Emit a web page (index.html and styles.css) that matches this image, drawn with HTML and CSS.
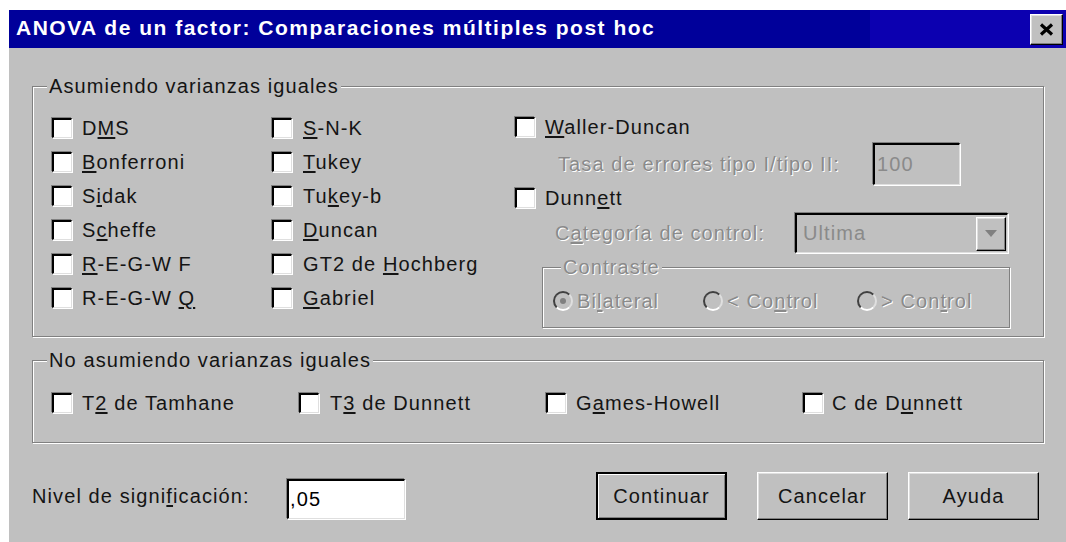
FILE: index.html
```html
<!DOCTYPE html>
<html lang="es">
<head>
<meta charset="utf-8">
<title>ANOVA de un factor: Comparaciones múltiples post hoc</title>
<link rel="stylesheet" href="styles.css">
</head>
<body>
<div class="dialog">
  <header class="titlebar">
    <span class="title">ANOVA de un factor: Comparaciones múltiples post hoc</span>
    <span class="close-btn">
      <svg width="15" height="13" viewBox="0 0 15 13"><path d="M2 1.5 L13 11.5 M13 1.5 L2 11.5" stroke="#000" stroke-width="3.2" fill="none"/></svg>
    </span>
  </header>

  <div class="client">
    <section class="group group-equal">
      <span class="legend">Asumiendo varianzas iguales</span>
      <div class="col col-a">
        <label class="check"><span class="box"></span><span>D<u>M</u>S</span></label>
        <label class="check"><span class="box"></span><span><u>B</u>onferroni</span></label>
        <label class="check"><span class="box"></span><span>S<u>i</u>dak</span></label>
        <label class="check"><span class="box"></span><span>S<u>c</u>heffe</span></label>
        <label class="check"><span class="box"></span><span><u>R</u>-E-G-W F</span></label>
        <label class="check"><span class="box"></span><span>R-E-G-W <u>Q</u></span></label>
      </div>
      <div class="col col-b">
        <label class="check"><span class="box"></span><span><u>S</u>-N-K</span></label>
        <label class="check"><span class="box"></span><span><u>T</u>ukey</span></label>
        <label class="check"><span class="box"></span><span>Tu<u>k</u>ey-b</span></label>
        <label class="check"><span class="box"></span><span><u>D</u>uncan</span></label>
        <label class="check"><span class="box"></span><span>GT2 de <u>H</u>ochberg</span></label>
        <label class="check"><span class="box"></span><span><u>G</u>abriel</span></label>
      </div>
      <div class="col col-c">
        <label class="check check-waller"><span class="box"></span><span><u>W</u>aller-Duncan</span></label>
        <div class="field-row row-rate">
          <span class="disabled rate-label">Tasa de errores tipo I/tipo II:</span>
          <span class="field field-rate disabled-field">100</span>
        </div>
        <label class="check check-dunnett"><span class="box"></span><span>Dunn<u>e</u>tt</span></label>
        <div class="field-row row-cat">
          <span class="disabled cat-label">C<u>a</u>tegoría de control:</span>
          <span class="field combo disabled-field">
            <span class="combo-value">Ultima</span>
            <span class="combo-btn"><svg width="12" height="7" viewBox="0 0 12 7"><path d="M0 0 H12 L6 7 Z" fill="#808080"/></svg></span>
          </span>
        </div>
        <section class="group group-contrast">
          <span class="legend disabled">Contraste</span>
          <div class="radios">
            <span class="radio"><span class="dot on"></span><span class="disabled">Bi<u>l</u>ateral</span></span>
            <span class="radio"><span class="dot"></span><span class="disabled">&lt; Co<u>n</u>trol</span></span>
            <span class="radio"><span class="dot"></span><span class="disabled">&gt; Con<u>t</u>rol</span></span>
          </div>
        </section>
      </div>
    </section>

    <section class="group group-unequal">
      <span class="legend">No asumiendo varianzas iguales</span>
      <div class="row-unequal">
        <label class="check"><span class="box"></span><span>T<u>2</u> de Tamhane</span></label>
        <label class="check"><span class="box"></span><span>T<u>3</u> de Dunnett</span></label>
        <label class="check"><span class="box"></span><span>G<u>a</u>mes-Howell</span></label>
        <label class="check"><span class="box"></span><span>C de D<u>u</u>nnett</span></label>
      </div>
    </section>

    <div class="footer">
      <span class="sig-label">Nivel de signi<u>f</u>icación:</span>
      <span class="field field-sig">,05</span>
      <span class="btn btn-default">Continuar</span>
      <span class="btn btn-cancel">Cancelar</span>
      <span class="btn btn-help">Ayuda</span>
    </div>
  </div>
</div>
</body>
</html>
```

FILE: styles.css
```css
html, body {
  margin: 0;
  padding: 0;
  background: #fff;
}

body {
  font-family: "Liberation Sans", Arial, sans-serif;
  font-size: 20px;
  letter-spacing: 1.1px;
  color: #141414;
}

u {
  text-decoration-thickness: 1.5px;
  text-underline-offset: 2px;
}

.dialog {
  margin: 10px 0 0 9px;
  width: 1057px;
  height: 532px;
  background: #c0c0c0;
  display: flex;
  flex-direction: column;
}

/* caption bar */
.titlebar {
  height: 38px;
  flex: none;
  display: flex;
  align-items: center;
  justify-content: space-between;
  padding: 0 3px 0 7px;
  background: linear-gradient(to right, #00009a 0, #00009a 81.5%, #0c00b0 81.5%, #0c00b0 100%);
}

.title {
  color: #fff;
  font-weight: bold;
  font-size: 21px;
  letter-spacing: 1.5px;
  padding-bottom: 2px;
  white-space: nowrap;
}

.close-btn {
  flex: none;
  width: 33px;
  height: 31px;
  box-sizing: border-box;
  display: flex;
  align-items: center;
  justify-content: center;
  background: #c0c0c0;
  border: 1px solid;
  border-color: #fff #000 #000 #fff;
  box-shadow: inset -1px -1px 0 #808080, inset 1px 1px 0 #dfdfdf;
}

.client {
  display: flex;
  flex-direction: column;
  padding: 38px 0 0 23px;
}

/* etched group frames */
.group {
  position: relative;
  border: 1px solid #808080;
  box-shadow: inset 1px 1px 0 #fff, 1px 1px 0 #fff;
  box-sizing: border-box;
}

.legend {
  position: absolute;
  top: -12px;
  left: 14px;
  padding: 0 2px;
  line-height: 22px;
  background: #c0c0c0;
  white-space: nowrap;
}

.group-equal {
  width: 1012px;
  height: 251px;
  display: flex;
  padding: 24px 0 0 19px;
}

.group-unequal {
  width: 1012px;
  height: 83px;
  margin-top: 23px;
  padding: 25px 0 0 19px;
}

.col {
  display: flex;
  flex-direction: column;
}

.col-a { width: 220px; flex: none; }
.col-b { width: 243px; flex: none; }
.col-c { flex: 1; }

/* checkboxes */
.check {
  display: flex;
  align-items: center;
  gap: 10px;
  height: 34px;
  white-space: nowrap;
}

.col-b .check { gap: 11px; }

.box {
  flex: none;
  width: 20px;
  height: 20px;
  box-sizing: border-box;
  background: #fff;
  border-style: solid;
  border-width: 2px 1px 1px 2px;
  border-color: #000 #dfdfdf #dfdfdf #000;
  box-shadow: -1px -1px 0 #808080, 1px 1px 0 #fff;
}

.check-waller { height: 32px; }
.check-dunnett { height: 26px; }

/* disabled text is embossed */
.disabled {
  color: #8a8a8a;
  text-shadow: 1px 1px 0 #fff;
}

.field-row {
  display: flex;
  align-items: center;
  white-space: nowrap;
}

.row-rate { height: 42px; }
.row-cat { height: 40px; margin-top: 2px; }

.rate-label {
  flex: none;
  box-sizing: border-box;
  width: 358px;
  padding-left: 43px;
}

.cat-label {
  flex: none;
  box-sizing: border-box;
  width: 280px;
  padding-left: 40px;
}

.field {
  flex: none;
  box-sizing: border-box;
  display: flex;
  align-items: center;
  border-style: solid;
  border-width: 2px 1px 1px 2px;
  border-color: #000 #dfdfdf #dfdfdf #000;
  box-shadow: -1px -1px 0 #808080, 1px 1px 0 #fff;
  background: #fff;
}

.disabled-field {
  background: #c0c0c0;
  color: #8a8a8a;
}

.field-rate {
  width: 87px;
  height: 42px;
  padding-left: 2px;
}

.combo {
  width: 213px;
  height: 40px;
  padding-left: 6px;
  justify-content: space-between;
}

.combo-btn {
  width: 30px;
  height: 34px;
  margin-right: 1px;
  box-sizing: border-box;
  display: flex;
  align-items: center;
  justify-content: center;
  border: 1px solid;
  border-color: #fff #000 #000 #fff;
  box-shadow: inset -1px -1px 0 #808080, inset 1px 1px 0 #dfdfdf;
}

.group-contrast {
  width: 468px;
  height: 61px;
  margin: 14px 0 0 27px;
  padding: 16px 0 0 10px;
}

.group-contrast .legend {
  left: 18px;
}

.radios {
  display: grid;
  grid-template-columns: 150px 154px auto;
  height: 34px;
  align-items: center;
}

.radio {
  display: flex;
  align-items: center;
  gap: 4px;
  white-space: nowrap;
}

.dot {
  flex: none;
  width: 20px;
  height: 20px;
  box-sizing: border-box;
  border-radius: 50%;
  border: 2px solid;
  border-color: #404040 #dfdfdf #fff #404040;
  background: #c0c0c0;
  display: flex;
  align-items: center;
  justify-content: center;
}

.dot.on::after {
  content: "";
  width: 6px;
  height: 6px;
  border-radius: 50%;
  background: #808080;
}

.row-unequal {
  display: grid;
  grid-template-columns: 247px 247px 257px auto;
}

.row-unequal .check:nth-child(2) { gap: 11px; }
.row-unequal .check:nth-child(4) { gap: 9px; }

/* bottom row */
.footer {
  display: flex;
  align-items: center;
  height: 48px;
  margin-top: 29px;
  white-space: nowrap;
}

.sig-label { width: 255px; flex: none; }

.field-sig {
  width: 118px;
  height: 40px;
  margin-top: 6px;
  padding-left: 1px;
  color: #000;
}

.btn {
  flex: none;
  box-sizing: border-box;
  width: 131px;
  height: 48px;
  display: flex;
  align-items: center;
  justify-content: center;
  border: 1px solid;
  border-color: #fff #000 #000 #fff;
  box-shadow: inset -1px -1px 0 #808080, inset 1px 1px 0 #dfdfdf;
}

.btn-default {
  margin-left: 191px;
  border: 2px solid #000;
  box-shadow: inset 1px 1px 0 #fff, inset -1px -1px 0 #808080;
}

.btn-cancel { margin-left: 30px; }
.btn-help { margin-left: 20px; }
```
